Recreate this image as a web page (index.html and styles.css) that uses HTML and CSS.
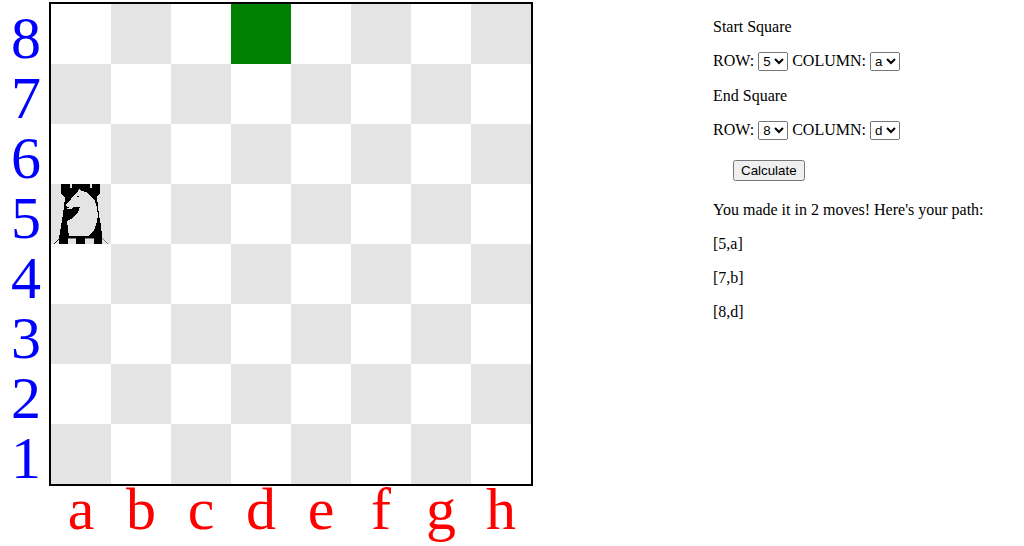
FILE: index.html
```
<!DOCTYPE html>
<html lang="en">
<head>
<meta charset="utf-8">
<title>Knight Moves</title>
<link rel="stylesheet" href="styles.css">
</head>
<body>
<main class="layout">
  <section class="board-area">
    <div class="rows"><span>8</span><span>7</span><span>6</span><span>5</span><span>4</span><span>3</span><span>2</span><span>1</span></div>
    <div class="board" id="board"></div>
    <div class="columns"><span>a</span><span>b</span><span>c</span><span>d</span><span>e</span><span>f</span><span>g</span><span>h</span></div>
  </section>
  <section class="panel">
    <p>Start Square</p>
    <p class="fields">
      <label for="start-row">ROW:</label>
      <select id="start-row"><option>1</option><option>2</option><option>3</option><option>4</option><option selected>5</option><option>6</option><option>7</option><option>8</option></select>
      <label for="start-column">COLUMN:</label>
      <select id="start-column"><option selected>a</option><option>b</option><option>c</option><option>d</option><option>e</option><option>f</option><option>g</option><option>h</option></select>
    </p>
    <p>End Square</p>
    <p class="fields">
      <label for="end-row">ROW:</label>
      <select id="end-row"><option>1</option><option>2</option><option>3</option><option>4</option><option>5</option><option>6</option><option>7</option><option selected>8</option></select>
      <label for="end-column">COLUMN:</label>
      <select id="end-column"><option>a</option><option>b</option><option>c</option><option selected>d</option><option>e</option><option>f</option><option>g</option><option>h</option></select>
    </p>
    <button class="calculate" type="button">Calculate</button>
    <div class="result">
      <p>You made it in 2 moves! Here's your path:</p>
      <p>[5,a]</p>
      <p>[7,b]</p>
      <p>[8,d]</p>
    </div>
  </section>
</main>
<template id="knight">
  <svg class="knight" viewBox="0 0 60 60" shape-rendering="crispEdges" role="img" aria-label="Knight">
    <path d="M10 0H19V4H21V0H39V4H41V0H49V9L46 13L47 22L48 31L50 42L51 52V60H43V54H34V60H25V54H17V60H8V54L10 42L12 30L14 14L10 9V0Z"/>
    <path class="light" d="M28 5L30 7L35 8L40 12L44 17L46 24L47 31L46 38L43 46L37 52H18L17 45L16 37L20 35L24 32L27 28L29 23H22L20 25H16V23L15 21L17 18L20 15L24 10L27 8Z"/>
    <path d="M26 12H28V13H26Z"/>
    <path d="M16 23H18V24H16Z"/>
    <path class="line" d="M17 54.5H25M34 54.5H43M51 54L57 60"/>
    <path class="line dark" d="M9 54L3 60"/>
  </svg>
</template>
<script src="board.js"></script>
</body>
</html>
```

FILE: styles.css
```
body {
  margin: 0;
  background: #fff;
  color: #000;
  font: 16px/18px "Liberation Serif", serif;
}

.layout {
  display: flex;
  align-items: flex-start;
  gap: 180px;
  padding-top: 2px;
}

.board-area {
  display: grid;
  grid-template-columns: 38px auto;
  padding-left: 11px;
}

.rows {
  display: flex;
  flex-direction: column;
  padding-top: 6px;
  color: blue;
  font-size: 60px;
  line-height: 60px;
}

.board {
  display: grid;
  grid-template-columns: repeat(8, 60px);
  grid-auto-rows: 60px;
  align-self: start;
  border: 2px solid #000;
}

.square.shaded {
  background: #e4e4e4;
}

.square.target {
  background: green;
}

.knight {
  display: block;
  width: 100%;
}

.knight .light {
  fill: #e4e4e4;
}

.knight .line {
  fill: none;
  stroke: #808080;
}

.knight .dark {
  stroke: #222;
}

.columns {
  display: grid;
  grid-column: 2;
  grid-template-columns: repeat(8, 60px);
  padding: 0 2px 14px;
  margin-top: -2px;
  color: red;
  font-size: 60px;
  line-height: 46px;
  text-align: center;
}

.panel {
  flex: 1;
}

.panel p {
  margin: 16px 0;
}

.fields {
  display: flex;
  align-items: flex-start;
  gap: 4px;
}

.fields label {
  line-height: 17px;
}

.fields select {
  height: 19px;
}

.calculate {
  display: block;
  margin: 20px;
}
```

FILE: board.js
```
const board = document.getElementById("board");
const knight = document.getElementById("knight");

for (let row = 8; row >= 1; row--) {
  [..."abcdefgh"].forEach((column, index) => {
    const square = document.createElement("div");
    square.className = "square";
    if ((row + index) % 2 === 1) square.classList.add("shaded");
    if (row === 8 && column === "d") square.classList.add("target");
    if (row === 5 && column === "a") square.append(knight.content.cloneNode(true));
    board.append(square);
  });
}
```
